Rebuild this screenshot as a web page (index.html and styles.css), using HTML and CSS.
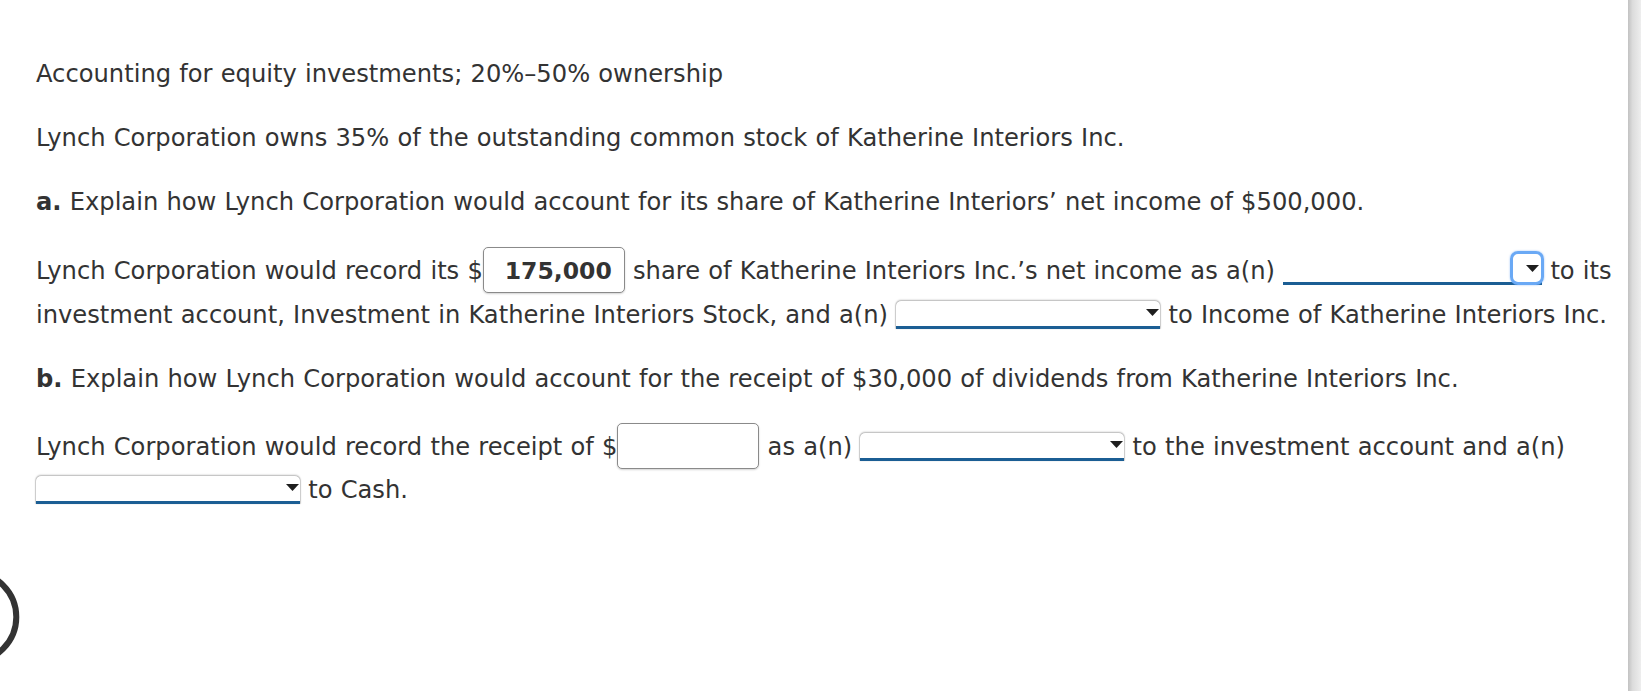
FILE: index.html
```html
<!DOCTYPE html>
<html lang="en">
<head>
<meta charset="utf-8">
<title>Accounting for equity investments</title>
<link rel="stylesheet" href="styles.css">
</head>
<body>
<div class="page">
  <main class="main">
    <p class="para">Accounting for equity investments; 20%–50% ownership</p>
    <p class="para">Lynch Corporation owns 35% of the outstanding common stock of Katherine Interiors Inc.</p>
    <p class="para"><b>a.</b> Explain how Lynch Corporation would account for its share of Katherine Interiors’ net income of $500,000.</p>
    <p class="para answer">Lynch Corporation would record its $<input class="amt" type="text" value="175,000" readonly> share of Katherine Interiors Inc.’s net income as a(n) <span class="dd focus"><span class="ring"><svg class="caret" width="13" height="7" viewBox="0 0 13 7"><path d="M0 0H13L6.5 7Z"/></svg></span></span> to its investment account, Investment in Katherine Interiors Stock, and a(n) <span class="dd"><svg class="caret" width="13" height="7" viewBox="0 0 13 7"><path d="M0 0H13L6.5 7Z"/></svg></span> to Income of Katherine Interiors Inc.</p>
    <p class="para"><b>b.</b> Explain how Lynch Corporation would account for the receipt of $30,000 of dividends from Katherine Interiors Inc.</p>
    <p class="para answer tight">Lynch Corporation would record the receipt of $<input class="amt" type="text" value="" readonly> as a(n) <span class="dd"><svg class="caret" width="13" height="7" viewBox="0 0 13 7"><path d="M0 0H13L6.5 7Z"/></svg></span> to the investment account and a(n) <span class="dd"><svg class="caret" width="13" height="7" viewBox="0 0 13 7"><path d="M0 0H13L6.5 7Z"/></svg></span> to Cash.</p>
    <svg class="arc" width="24" height="100" viewBox="0 0 24 100"><circle cx="-28.5" cy="50" r="44.8" fill="none" stroke="#333" stroke-width="6"/></svg>
  </main>
  <div class="sidebar"></div>
</div>
</body>
</html>
```

FILE: styles.css
```css
html, body {
  margin: 0;
  padding: 0;
  background: #fff;
}

.page {
  display: flex;
  min-height: 691px;
}

.main {
  flex: 1;
  padding: 52px 0 0 36px;
  display: flex;
  flex-direction: column;
  gap: 20px;
  font-family: "DejaVu Sans", Verdana, sans-serif;
  font-size: 24.2px;
  word-spacing: 0.5px;
  color: #333;
}

.para {
  margin: 0;
  line-height: 44px;
}

.para b {
  font-weight: bold;
}

.answer {
  margin-top: 5px;
}

.tight {
  line-height: 43px;
}

.amt {
  box-sizing: border-box;
  width: 142px;
  height: 46px;
  margin: -4px 0;
  padding: 2px 12px 0 12px;
  border: 1.5px solid #8a8a8a;
  border-radius: 5px;
  box-shadow: 0 1px 2px rgba(0, 0, 0, 0.18);
  background: #fff;
  font-family: "DejaVu Sans", Verdana, sans-serif;
  font-size: 23.5px;
  font-weight: bold;
  color: #333;
  text-align: right;
  outline: none;
}

.dd {
  display: inline-block;
  box-sizing: border-box;
  width: 264px;
  height: 28px;
  vertical-align: -6px;
  background: #fff;
  border-bottom: 3.5px solid #1b5e94;
  border-radius: 5px 5px 0 0;
  box-shadow: 0 -1px 2px rgba(0, 0, 0, 0.28), 1px 0 1px rgba(0, 0, 0, 0.15), -1px 0 1px rgba(0, 0, 0, 0.15);
}

.caret {
  display: block;
  margin: 8px 1px 0 auto;
  fill: #1e1e1e;
}

.dd.focus {
  width: 259px;
  background: transparent;
  box-shadow: none;
}

.ring {
  display: block;
  box-sizing: border-box;
  width: 34px;
  height: 34px;
  margin: -6px -2px 0 auto;
  border: 3px solid #6aa9f5;
  border-radius: 8px;
  box-shadow: 0 0 2px rgba(80, 150, 240, 0.6);
}

.ring .caret {
  margin: 11px 2px 0 auto;
}

.arc {
  display: block;
  margin: 35px 0 0 -36px;
}

.sidebar {
  width: 13px;
  flex: none;
  background: linear-gradient(to right, #c2c2c2 0%, #dcdcdc 35%, #eeeeee 100%);
}
```
